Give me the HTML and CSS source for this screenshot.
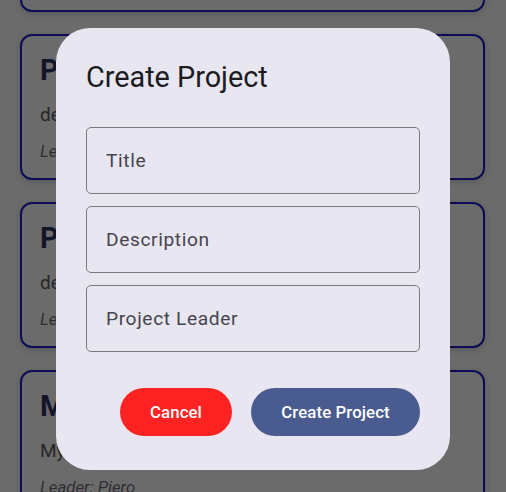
FILE: index.html
```html
<!DOCTYPE html>
<html>
<head>
<meta charset="utf-8">
<link rel="stylesheet" href="styles.css">
</head>
<body>
<div class="list">
  <div class="card"></div>
  <div class="card">
    <div class="card-title">Project One</div>
    <div class="card-desc">description of project</div>
    <div class="card-leader">Leader: Luigi</div>
  </div>
  <div class="card">
    <div class="card-title">Project Two</div>
    <div class="card-desc">description of project</div>
    <div class="card-leader">Leader: Anna</div>
  </div>
  <div class="card">
    <div class="card-title">My Project</div>
    <div class="card-desc">My first project</div>
    <div class="card-leader">Leader: Piero</div>
  </div>
</div>

<div class="scrim">
  <div class="dialog">
    <div class="dialog-title">Create Project</div>
    <div class="fields">
      <div class="field"><span class="label">Title</span></div>
      <div class="field"><span class="label">Description</span></div>
      <div class="field"><span class="label">Project Leader</span></div>
    </div>
    <div class="actions">
      <button class="btn btn-cancel">Cancel</button>
      <button class="btn btn-create">Create Project</button>
    </div>
  </div>
</div>
</body>
</html>
```

FILE: styles.css
```css
html, body {
  margin: 0;
  padding: 0;
  height: 100%;
  overflow: hidden;
}
body {
  background: #6b6b6b;
  font-family: Roboto, "Noto Sans", sans-serif;
}
.list {
  display: flex;
  flex-direction: column;
  gap: 22px;
  padding: 0 21px 0 20px;
  margin-top: -134px;
}
.card {
  height: 146px;
  box-sizing: border-box;
  border: 2px solid #0d0b55;
  border-radius: 12px;
  padding: 16px 18px 17px;
  display: flex;
  flex-direction: column;
  gap: 14.5px;
  box-shadow: 0 2px 6px rgba(0,0,0,0.18);
}
.card-title {
  font-size: 28.8px;
  line-height: 36px;
  font-weight: 700;
  color: #14152a;
}
.card-desc {
  font-size: 19px;
  line-height: 24px;
  color: #262626;
}
.card-leader {
  font-size: 16.8px;
  line-height: 20px;
  font-style: italic;
  color: #2e2e33;
}
.scrim {
  position: fixed;
  inset: 0;
  display: flex;
  align-items: center;
  justify-content: center;
  padding-top: 6px;
}
.dialog {
  width: 394px;
  height: 442px;
  box-sizing: border-box;
  background: #e8e6f0;
  border-radius: 34px;
  padding: 30px 30px 0;
  display: flex;
  flex-direction: column;
}
.dialog-title {
  font-size: 28.8px;
  line-height: 38px;
  color: #1b1b21;
  margin-bottom: 31px;
}
.fields {
  display: flex;
  flex-direction: column;
  gap: 12px;
}
.field {
  height: 67px;
  box-sizing: border-box;
  border: 1.2px solid #7a7880;
  border-radius: 5px;
  padding: 0 19px;
  display: flex;
  align-items: center;
}
.label {
  font-size: 19.2px;
  letter-spacing: 0.6px;
  color: #46444e;
}
.actions {
  display: flex;
  justify-content: flex-end;
  gap: 19px;
  margin-top: 36px;
}
.btn {
  height: 48px;
  border: none;
  border-radius: 24px;
  font-family: Roboto, "Noto Sans", sans-serif;
  font-size: 16.8px;
  font-weight: 500;
  letter-spacing: 0.1px;
  color: #ffffff;
  padding: 0;
}
.btn-cancel {
  width: 112px;
  background: #ff2222;
}
.btn-create {
  width: 169px;
  background: #4a5b8f;
}
```
